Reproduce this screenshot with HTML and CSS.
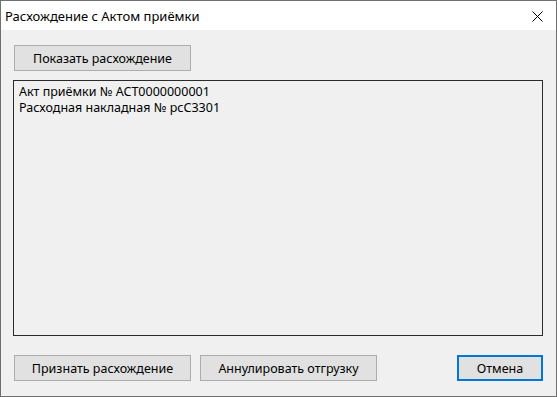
FILE: index.html
```html
<!DOCTYPE html>
<html lang="ru">
<head>
  <meta charset="UTF-8">
  <title>Расхождение с Актом приёмки</title>
  <link rel="stylesheet" href="styles.css">
</head>
<body>
<div class="window">
  <!-- Title bar -->
  <div class="title-bar">
    <span class="title-text">Расхождение с Актом приёмки</span>
    <span class="close-btn">
      <svg width="11" height="11" viewBox="0 0 11 11">
        <path d="M0.5 0.5 L10.5 10.5 M10.5 0.5 L0.5 10.5" stroke="#000" stroke-width="1" fill="none"/>
      </svg>
    </span>
  </div>

  <!-- Dialog content -->
  <div class="dialog-body">
    <div class="top-row">
      <button class="win-button wide">Показать расхождение</button>
    </div>

    <div class="text-box">
      <div>Акт приёмки № ACT0000000001</div>
      <div>Расходная накладная № рсС3301</div>
    </div>

    <div class="bottom-row">
      <button class="win-button wide">Признать расхождение</button>
      <button class="win-button wide">Аннулировать отгрузку</button>
      <button class="win-button cancel">Отмена</button>
    </div>
  </div>
</div>
</body>
</html>
```

FILE: styles.css
```css
body, html {
  margin: 0;
  padding: 0;
  background: #f0f0f0;
  font-family: "Noto Sans", "Open Sans", sans-serif;
}

.window {
  width: 557px;
  height: 397px;
  box-sizing: border-box;
  border: 1px solid #707070;
  background: #f0f0f0;
  display: flex;
  flex-direction: column;
}

.title-bar {
  height: 29px;
  background: white;
  display: flex;
  align-items: center;
  justify-content: space-between;
  padding: 0 13px 0 4px;
  flex-shrink: 0;
}

.title-text {
  font-size: 13px;
  color: black;
}

.close-btn {
  display: flex;
  margin-top: 1px;
}

.dialog-body {
  flex: 1;
  display: flex;
  flex-direction: column;
  padding: 15px 13px 15px 12px;
}

.top-row {
  display: flex;
  padding-left: 1px;
  margin-bottom: 9px;
}

.win-button {
  height: 26px;
  box-sizing: border-box;
  background: #e1e1e1;
  border: 1px solid #adadad;
  font-family: "Noto Sans", "Open Sans", sans-serif;
  font-size: 12.5px;
  color: black;
  padding: 0;
  margin: 0;
}

.win-button.wide {
  width: 177px;
}

.win-button.cancel {
  width: 86px;
  border: 2px solid #0078d7;
  margin-left: auto;
}

.text-box {
  flex: 1;
  border: 1px solid #2b2b2b;
  background: #f0f0f0;
  padding: 3px 5px;
  font-size: 12.5px;
  line-height: 16px;
  color: black;
}

.bottom-row {
  display: flex;
  gap: 9px;
  padding-left: 1px;
  margin-top: 19px;
}
```
